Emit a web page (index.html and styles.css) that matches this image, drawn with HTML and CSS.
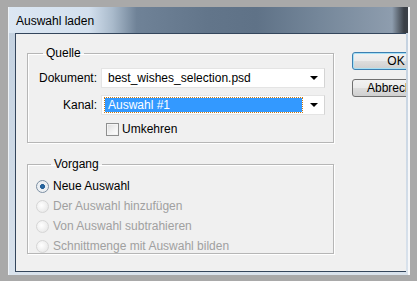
FILE: index.html
```html
<!DOCTYPE html>
<html lang="de">
<head>
  <title>Auswahl laden</title>
  <meta charset="utf-8">
  <link rel="stylesheet" href="styles.css">
</head>
<body>
  <div class="window">
    <div class="titlebar">Auswahl laden</div>
    <div class="client">
      <div class="groups">
        <fieldset class="group group-source">
          <legend>Quelle</legend>
          <div class="form">
            <span class="label">Dokument:</span>
            <div class="select">
              <span class="select-value">best_wishes_selection.psd</span>
              <span class="arrow"></span>
            </div>
            <span class="label">Kanal:</span>
            <div class="select select-focus">
              <span class="select-value">Auswahl #1</span>
              <span class="arrow"></span>
            </div>
            <label class="check">
              <span class="checkbox"></span>
              Umkehren
            </label>
          </div>
        </fieldset>
        <fieldset class="group group-mode">
          <legend>Vorgang</legend>
          <ul class="radios">
            <li class="radio-row"><span class="radio radio-on"></span>Neue Auswahl</li>
            <li class="radio-row is-disabled"><span class="radio"></span>Der Auswahl hinzufügen</li>
            <li class="radio-row is-disabled"><span class="radio"></span>Von Auswahl subtrahieren</li>
            <li class="radio-row is-disabled"><span class="radio"></span>Schnittmenge mit Auswahl bilden</li>
          </ul>
        </fieldset>
      </div>
      <div class="buttons">
        <button class="button button-default">OK</button>
        <button class="button">Abbrechen</button>
      </div>
    </div>
  </div>
</body>
</html>
```

FILE: styles.css
```css
*, *::before, *::after {
  margin: 0;
  padding: 0;
  box-sizing: border-box;
}

body {
  background-color: #a9a9a9;
  font-family: "Liberation Sans", Arial, sans-serif;
  font-size: 12px;
  color: #000000;
  overflow: hidden;
}

.window {
  display: flex;
  flex-direction: column;
  width: 402px;
  height: 268px;
  margin: 7px 0 0 8px;
  padding: 0 2px 3px 6px;
  border-left: 1px solid #eef2f6;
  border-right: 2px solid #f6f7f9;
  background: linear-gradient(180deg, #c2d0df 0%, #cfdae6 60%, #d9e2ec 100%);
}

.titlebar {
  height: 26px;
  padding: 7px 0 0 1px;
  margin-right: -2px;
  margin-left: -6px;
  padding-left: 7px;
  line-height: 14px;
  background: linear-gradient(90deg, #dce7f3 0%, #d3e0ee 20%, #a9bacb 26%, #6f8297 32%, #62758a 50%, #5f7287 62%, #75879a 78%, #8e9dae 96%, #3a3f46 99%);
}

.client {
  flex: 1;
  display: flex;
  overflow: hidden;
  border: 1px solid #34465c;
  border-right: none;
  background-color: #f0f0f0;
}

.groups {
  display: flex;
  flex-direction: column;
  gap: 14px;
  padding: 12px 0 0 11px;
}

.group {
  width: 307px;
  border: 1px solid #b6b6b6;
  box-shadow: inset 1px 1px 0 #ffffff, 1px 1px 0 #ffffff;
}

.group legend {
  margin-left: 15px;
  padding: 0 3px;
  line-height: 14px;
}

.group-source {
  height: 97px;
  padding: 8px 0 0;
}

.group-mode {
  height: 97px;
  padding: 5px 0 0 8px;
}

.form {
  display: grid;
  grid-template-columns: 69px 224px;
  column-gap: 4px;
  row-gap: 7px;
  align-items: center;
}

.label {
  text-align: right;
}

.select {
  display: flex;
  align-items: center;
  height: 20px;
  padding: 0 5px 0 3px;
  background-color: #ffffff;
  border: 1px solid #e4e4e4;
  border-right-color: #d4d4d4;
}

.select-value {
  flex: 1;
  padding: 0 3px;
  line-height: 14px;
}

.select-focus .select-value {
  margin-right: 8px;
  color: #ffffff;
  background-color: #3399ff;
  outline: 1px dotted #c97a14;
}

.arrow {
  width: 0;
  height: 0;
  border-left: 4px solid transparent;
  border-right: 4px solid transparent;
  border-top: 4px solid #000000;
  margin-right: 1px;
}

.check {
  grid-column: 2;
  display: flex;
  align-items: center;
  gap: 3px;
  margin: 0 0 0 5px;
}

.checkbox {
  width: 13px;
  height: 13px;
  border: 1px solid #8e8f8f;
  background: linear-gradient(135deg, #dcdcdc 0%, #f4f4f4 60%, #ffffff 100%);
  box-shadow: inset 0 0 0 1px #f4f4f4;
}

.radios {
  list-style: none;
}

.radio-row {
  display: flex;
  align-items: center;
  gap: 4px;
  height: 20px;
}

.is-disabled {
  color: #a0a0a0;
}

.radio {
  width: 13px;
  height: 13px;
  border-radius: 50%;
  border: 1px solid #d6d6d6;
  background: radial-gradient(circle at 40% 40%, #ffffff 0%, #eeeeee 60%, #e2e2e2 100%);
}

.radio-on {
  border-color: #7c8fa3;
  background: radial-gradient(circle, #2e6da8 0%, #1f5b94 28%, #e9eef3 34%, #f3f3f3 100%);
}

.buttons {
  display: flex;
  flex-direction: column;
  gap: 9px;
  padding: 18px 0 0 18px;
}

.button {
  flex: none;
  width: 88px;
  height: 18px;
  border: 1px solid #707070;
  border-radius: 3px;
  background: linear-gradient(180deg, #f2f2f2 0%, #ebebeb 48%, #dddddd 52%, #cfcfcf 100%);
  font-family: inherit;
  font-size: 12px;
  color: #000000;
}

.button-default {
  border-color: #3c7fb1;
  box-shadow: inset 0 0 0 1px #a6e0f5;
}
```
